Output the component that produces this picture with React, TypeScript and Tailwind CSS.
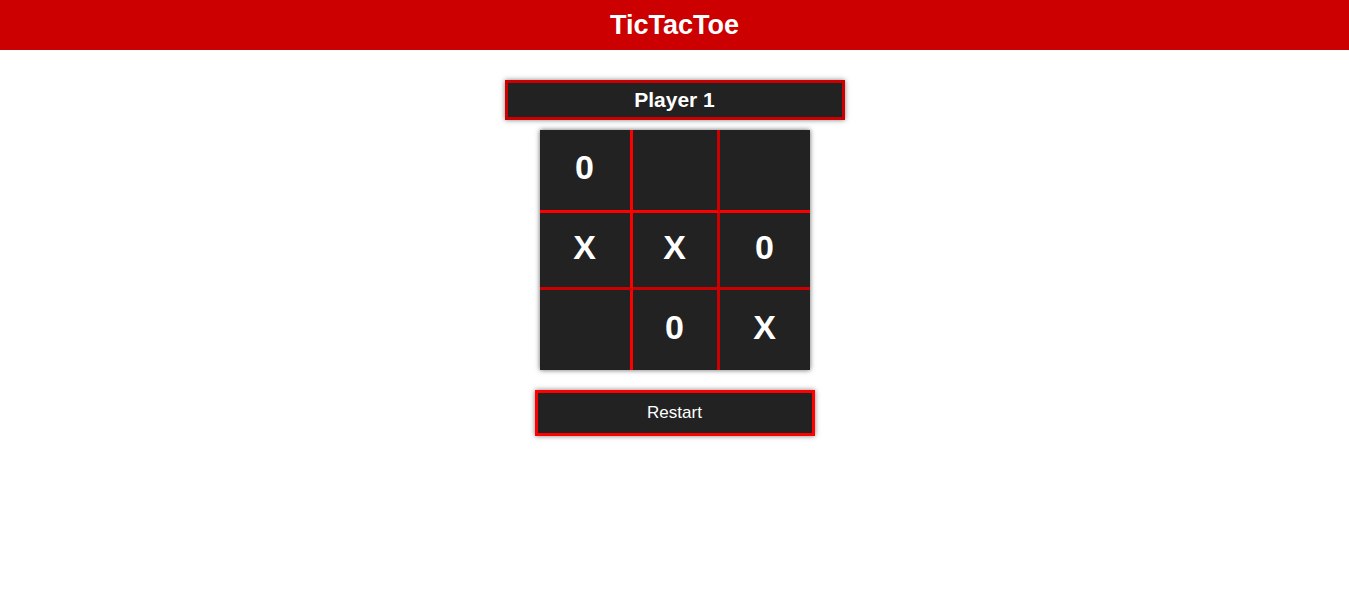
const board = ["0", "", "", "X", "X", "0", "", "0", "X"];

const cellBorders = [
  "border-r-[3px] border-b-[3px] border-r-[#ff0000] border-b-[#ff0000]",
  "border-r-[3px] border-b-[3px] border-r-[#cc0000] border-b-[#ff0000]",
  "border-b-[3px] border-b-[#ff0000]",
  "border-r-[3px] border-b-[3px] border-r-[#ff0000] border-b-[#cc0000]",
  "border-r-[3px] border-b-[3px] border-r-[#cc0000] border-b-[#cc0000]",
  "border-b-[3px] border-b-[#cc0000]",
  "border-r-[3px] border-r-[#ff0000]",
  "border-r-[3px] border-r-[#cc0000]",
  "",
];

export default function App() {
  return (
    <div className="min-h-screen bg-white font-['Liberation_Sans',Arial,sans-serif]">
      <header className="flex h-[50px] items-center justify-center bg-[#cc0000]">
        <h1 className="text-[27px] font-bold text-white">TicTacToe</h1>
      </header>

      <main className="flex flex-col items-center">
        <div className="mt-[30px] flex h-[40px] w-[340px] items-center justify-center border-[3px] border-[#cc0000] bg-[#222222] text-[21px] font-bold text-white shadow-[0_0_5px_rgba(0,0,0,0.5)]">
          Player 1
        </div>

        <div className="mt-[10px] grid grid-cols-[93px_87px_90px] grid-rows-[83px_77px_80px] bg-[#222222] shadow-[0_0_5px_rgba(0,0,0,0.6)]">
          {board.map((v, i) => (
            <div
              key={i}
              className={`flex items-center justify-center pb-[5px] text-[34px] font-bold text-white ${cellBorders[i]}`}
            >
              {v}
            </div>
          ))}
        </div>

        <button
          type="button"
          className="mt-[20px] flex h-[46px] w-[280px] items-center justify-center border-[3px] border-[#ff0000] bg-[#222222] text-[17px] text-white shadow-[0_0_5px_rgba(0,0,0,0.5)]"
        >
          Restart
        </button>
      </main>
    </div>
  );
}
